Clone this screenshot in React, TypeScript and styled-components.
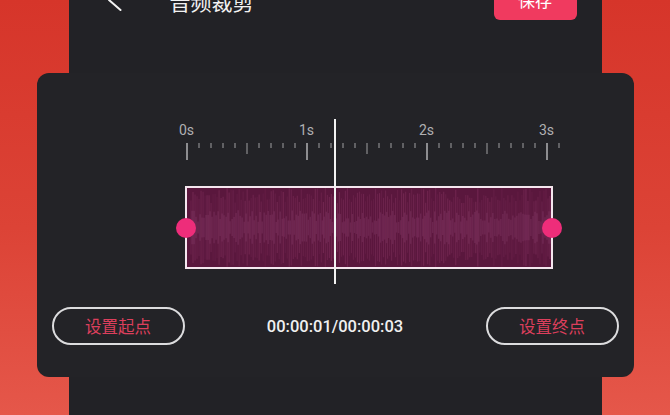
import React from "react";
import styled, { createGlobalStyle } from "styled-components";

const Global = createGlobalStyle`
  html, body { margin: 0; padding: 0; }
  body {
    width: 670px;
    height: 415px;
    overflow: hidden;
    background: linear-gradient(180deg, #d6352a 0%, #dc4336 55%, #e5574a 100%);
    font-family: Roboto, "Noto Sans CJK SC", sans-serif;
  }
`;

const Page = styled.div`
  width: 670px;
  height: 415px;
  display: flex;
  justify-content: center;
`;

const Phone = styled.div`
  width: 533px;
  height: 415px;
  background: #222226;
  display: flex;
  flex-direction: column;
`;

const Header = styled.div`
  height: 42px;
  margin-top: -21px;
  display: flex;
  align-items: center;
  padding: 0 25px 0 38px;
`;

const Back = styled.svg`
  width: 16px;
  height: 24px;
  flex: none;
`;

const Title = styled.div`
  margin-left: 47px;
  margin-top: 2px;
  color: #f2f2f2;
  font-family: "Noto Sans CJK SC", sans-serif;
  font-size: 21px;
  flex: 1;
`;

const SaveButton = styled.div`
  width: 83px;
  height: 42px;
  border-radius: 6px;
  background: #f03a5f;
  color: #fff;
  font-family: "Noto Sans CJK SC", sans-serif;
  font-size: 17px;
  display: flex;
  align-items: center;
  justify-content: center;
  margin-top: -2px;
`;

const Card = styled.div`
  margin: 52px -32px 0 -32px;
  height: 304px;
  box-sizing: border-box;
  background: #232327;
  border-radius: 12px;
  padding-top: 49px;
  display: flex;
  flex-direction: column;
`;

const Timeline = styled.div`
  position: relative;
  margin-left: 90px;
  width: 480px;
`;

const Labels = styled.div`
  display: flex;
  height: 17px;
`;

const Label = styled.span`
  width: 120px;
  text-align: center;
  color: #b0b0b2;
  font-size: 14px;
  line-height: 17px;
`;

const Ticks = styled.svg`
  display: block;
  margin-top: 1px;
  width: 480px;
  height: 22px;
`;

const WaveRow = styled.div`
  margin-top: 24px;
  height: 83px;
  display: flex;
  padding-left: 58px;
`;

const WaveBox = styled.div`
  position: relative;
  width: 368px;
  height: 83px;
  box-sizing: border-box;
  border: 2.5px solid #f4e6ee;
  background: #5a173d;
`;

const WaveSvg = styled.svg`
  display: block;
  width: 100%;
  height: 100%;
`;

const Handle = styled.div<{ $side: "left" | "right" }>`
  position: absolute;
  top: 50%;
  ${(p) => (p.$side === "left" ? "left: -11px;" : "right: -11px;")}
  width: 20px;
  height: 20px;
  margin-top: -10px;
  border-radius: 50%;
  background: #ee2d7a;
`;

const Playhead = styled.div`
  position: absolute;
  left: 207px;
  top: -3px;
  width: 2px;
  height: 165px;
  background: #f2f2f2;
`;

const Controls = styled.div`
  margin-top: 38px;
  padding: 0 15px;
  display: flex;
  align-items: center;
  justify-content: space-between;
`;

const PillButton = styled.div`
  width: 133px;
  height: 38px;
  box-sizing: border-box;
  border: 2px solid #dcdcde;
  border-radius: 19px;
  display: flex;
  align-items: center;
  justify-content: center;
  color: #dc3f5c;
  font-family: "Noto Sans CJK SC", sans-serif;
  font-size: 16.5px;
`;

const TimeText = styled.div`
  color: #f0f0f0;
  font-size: 16.5px;
  font-weight: 500;
`;

function rand(i: number) {
  const x = Math.sin(i * 12.9898 + 78.233) * 43758.5453;
  return x - Math.floor(x);
}

const tickEls = Array.from({ length: 32 }, (_, i) => {
  const x = 60 + i * 12;
  const major = i % 10 === 0;
  const mid = i % 5 === 0;
  const y2 = major ? 20 : mid ? 14 : 8;
  return (
    <line
      key={i}
      x1={x}
      x2={x}
      y1={3}
      y2={y2}
      stroke={major ? "#8d8d90" : "#77777a"}
      strokeWidth={major ? 2 : 1.5}
    />
  );
});

const waveLines = Array.from({ length: 180 }, (_, i) => {
  const x = 4 + i * 2;
  const h = 24 + rand(i) * 15;
  const op = 0.06 + rand(i + 300) * 0.16;
  return (
    <line key={"a" + i} x1={x} x2={x} y1={39 - h} y2={39 + h} stroke="#c25a92" strokeOpacity={op} strokeWidth={1.2} />
  );
});

const coreLines = Array.from({ length: 180 }, (_, i) => {
  const x = 5 + i * 2;
  const h = 5 + rand(i + 700) * 12;
  return (
    <line key={"c" + i} x1={x} x2={x} y1={39 - h} y2={39 + h} stroke="#a85a8c" strokeOpacity={0.22} strokeWidth={1.4} />
  );
});

export default function App() {
  return (
    <Page>
      <Global />
      <Phone>
        <Header>
          <Back viewBox="0 0 16 24">
            <path d="M13.5 2 L2 12 L13.5 22" fill="none" stroke="#f2f2f2" strokeWidth={2} strokeLinecap="round" strokeLinejoin="round" />
          </Back>
          <Title>音频裁剪</Title>
          <SaveButton>保存</SaveButton>
        </Header>
        <Card>
          <Timeline>
            <Labels>
              <Label>0s</Label>
              <Label>1s</Label>
              <Label>2s</Label>
              <Label>3s</Label>
            </Labels>
            <Ticks viewBox="0 0 480 22">{tickEls}</Ticks>
            <WaveRow>
              <WaveBox>
                <WaveSvg viewBox="0 0 363 78" preserveAspectRatio="none">
                  {waveLines}
                  {coreLines}
                </WaveSvg>
                <Handle $side="left" />
                <Handle $side="right" />
              </WaveBox>
            </WaveRow>
            <Playhead />
          </Timeline>
          <Controls>
            <PillButton>设置起点</PillButton>
            <TimeText>00:00:01/00:00:03</TimeText>
            <PillButton>设置终点</PillButton>
          </Controls>
        </Card>
      </Phone>
    </Page>
  );
}
